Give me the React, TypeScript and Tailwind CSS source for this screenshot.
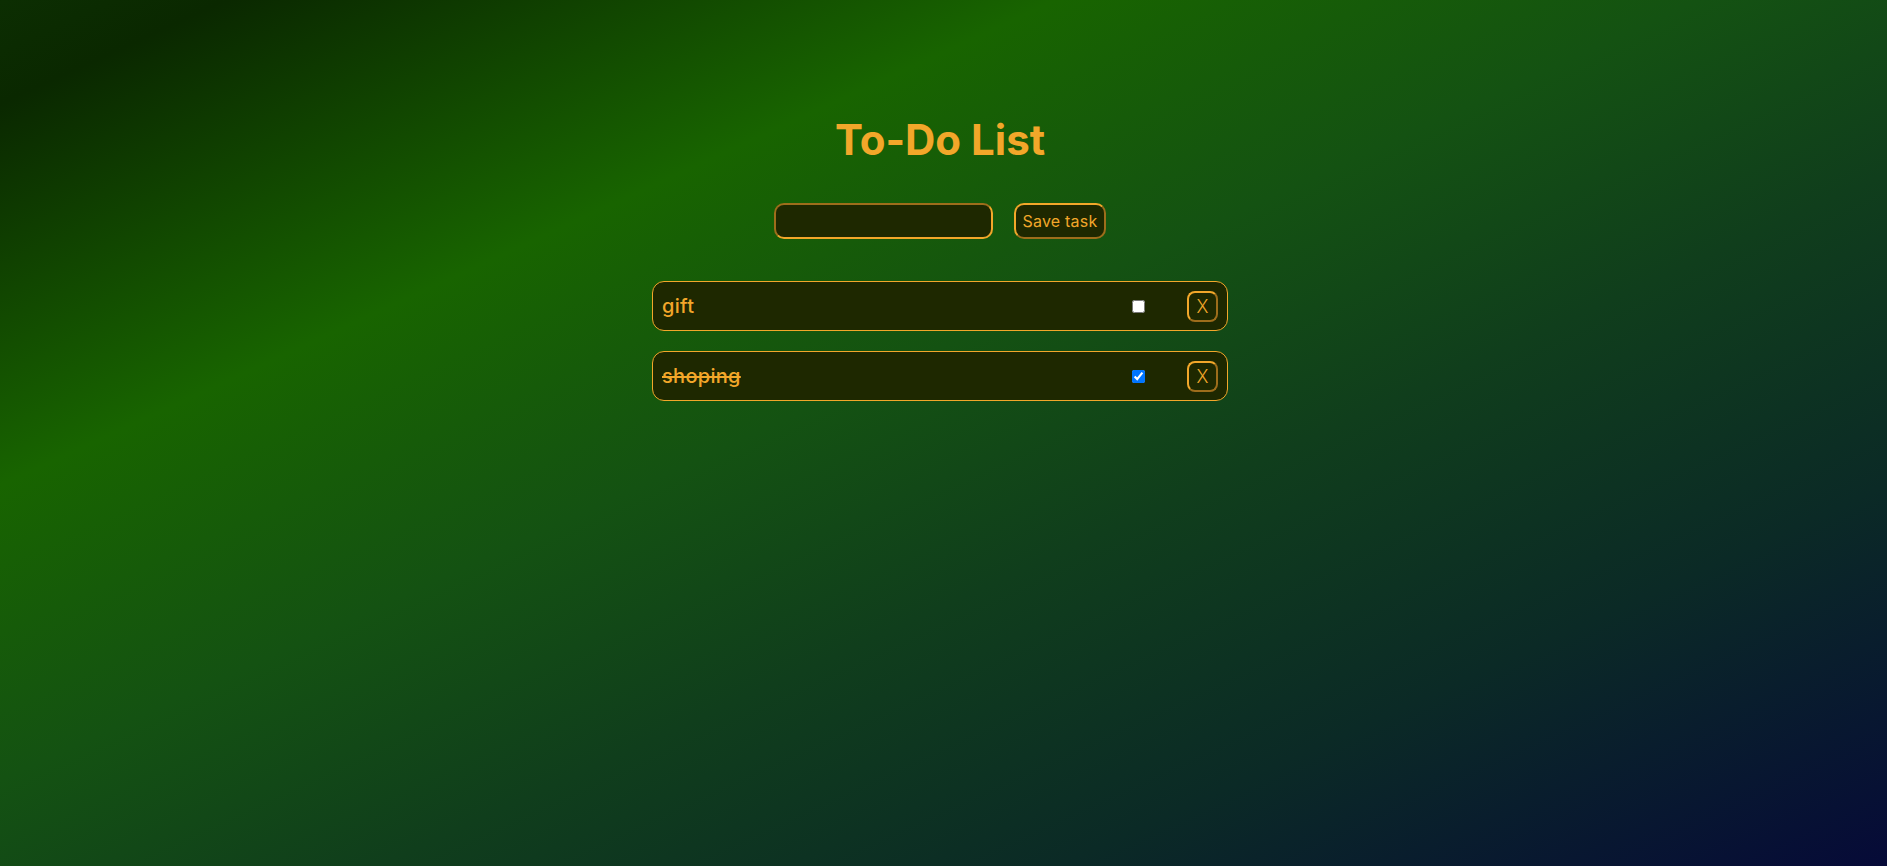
import React from "react";

export default function App() {
  const tasks = [
    { text: "gift", done: false },
    { text: "shoping", done: true },
  ];
  return (
    <div
      className="min-h-[866px] w-full bg-[linear-gradient(to_bottom_right,#0c2e02_0%,#0a2800_6%,#186400_28%,#145212_45%,#103e1c_60%,#0b2a26_78%,#060a38_100%)] font-['Inter',sans-serif] text-[#f2a72a]"
    >
      <div className="mr-[7px] flex flex-col items-center pt-[114px]">
        <h1 className="text-[42px] font-bold leading-[52px]">To-Do List</h1>
        <div className="mt-[37px] flex items-center gap-[21px]">
          <input
            type="text"
            className="h-[36px] w-[219px] rounded-[10px] border-2 border-[#f2a72a] bg-[#1e2800] px-2 text-[16px] text-[#f2a72a] outline-none [border-style:inset]"
          />
          <button className="h-[36px] w-[92px] rounded-[10px] border-2 border-[#f2a72a] bg-[#1e2800] text-[16px] font-normal tracking-[0.2px] text-[#f2a72a] [border-style:outset]">
            Save task
          </button>
        </div>
        <div className="mt-[42px] flex w-[576px] flex-col gap-[20px]">
          {tasks.map((t) => (
            <div
              key={t.text}
              className="flex h-[50px] items-center rounded-[12px] border border-[#f2a72a] bg-[#1e2800] pl-[9px] pr-[9px]"
            >
              <span className={"flex-1 text-[20px] font-medium tracking-[0.3px] " + (t.done ? "line-through" : "")}>{t.text}</span>
              <input type="checkbox" defaultChecked={t.done} className="m-0 h-[13px] w-[13px]" />
              <button className="ml-[42px] flex h-[31px] w-[31px] items-center justify-center rounded-[8px] border-2 border-[#f2a72a] bg-transparent text-[18px] font-light text-[#f2a72a] [border-style:outset]">
                X
              </button>
            </div>
          ))}
        </div>
      </div>
    </div>
  );
}
